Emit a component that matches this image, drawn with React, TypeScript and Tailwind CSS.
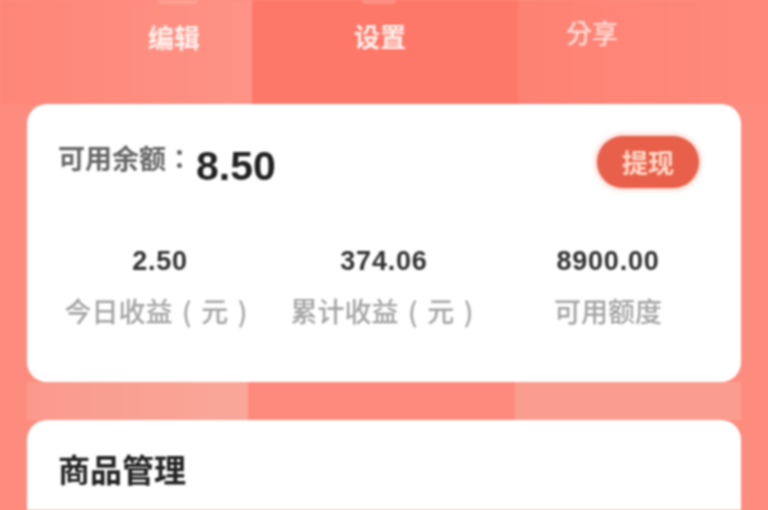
const font = { fontFamily: '"Noto Sans CJK TC","Liberation Sans",sans-serif' };

function Stat({ value, label, className, valueClass }: { value: string; label: string; className: string; valueClass: string }) {
  return (
    <div className={`flex flex-col items-center ${className}`}>
      <div className={`text-[27px] leading-[36px] font-bold text-[#333] font-['Liberation_Sans'] tracking-[0.8px] ${valueClass}`}>{value}</div>
      <div className="mt-[14px] text-[27px] leading-[36px] font-medium text-[#a3a3a3] whitespace-nowrap [word-spacing:3.5px]">{label}</div>
    </div>
  );
}

export default function App() {
  return (
    <div className="w-[768px] h-[510px] overflow-hidden bg-[#fe8c7e]">
      <div style={font} className="w-[768px] h-[510px] flex flex-col blur-[1.2px] bg-[#fe8c7e]">
        <div className="flex h-[104px] shrink-0">
          <div className="relative w-[252px] pl-[148px] pt-[18px] bg-[linear-gradient(90deg,#fe8678,#fd9386)] text-[26px] leading-[38px] font-bold text-[#fff0ec]">
            <div className="absolute left-[158px] top-0 w-[40px] h-[4px] rounded-b-full bg-[#ffc9bc]/30" />
            编辑
          </div>
          <div className="relative w-[266px] pl-[102px] pt-[17px] bg-[#fe7869] text-[26px] leading-[38px] font-bold text-[#fff0ec]">
            <div className="absolute left-[110px] top-0 w-[34px] h-[4px] rounded-b-full bg-[#ffc9bc]/30" />
            设置
          </div>
          <div className="w-[250px] pl-[48px] pt-[13px] bg-[linear-gradient(90deg,#fe8274,#ff8a7c)] text-[26px] leading-[38px] font-medium text-[#ffdcd5]">
            分享
          </div>
        </div>

        <div className="mx-[27px] h-[278px] shrink-0 rounded-[20px] bg-white">
          <div className="flex items-start pl-[31px] pr-[42px] pt-[32px]">
            <span className="text-[27px] leading-[44px] font-bold text-[#666] whitespace-nowrap">可用余额：</span>
            <span className="ml-[3px] mt-[5px] text-[41px] leading-[50px] font-bold text-[#222] font-['Liberation_Sans']">8.50</span>
            <button className="ml-auto w-[102px] h-[52px] rounded-full bg-[#e8604a] shadow-[0_0_6px_#f5a08f] text-[26px] leading-[52px] font-bold text-[#ffd9c8]">提现</button>
          </div>
          <div className="flex mt-[52px] pl-[35px]">
            <Stat value="2.50" label="今日收益 ( 元 )" className="w-[188px]" valueClass="pl-[8px]" />
            <Stat value="374.06" label="累计收益 ( 元 )" className="w-[188px] ml-[38px]" valueClass="pl-[4px]" />
            <Stat value="8900.00" label="可用额度" className="w-[110px] ml-[77px]" valueClass="" />
          </div>
        </div>

        <div className="mx-[27px] flex h-[38px] shrink-0">
          <div className="w-[221px] bg-[linear-gradient(90deg,#fa9a8c,#f9a799)]" />
          <div className="w-[267px] bg-[#fd8a7c]" />
          <div className="flex-1 bg-[#fb9d8e]" />
        </div>

        <div className="mx-[27px] flex-1 rounded-t-[20px] bg-white pl-[31px] pt-[25px]">
          <div className="text-[32px] leading-[46px] font-bold text-[#222]">商品管理</div>
        </div>
      </div>
    </div>
  );
}
